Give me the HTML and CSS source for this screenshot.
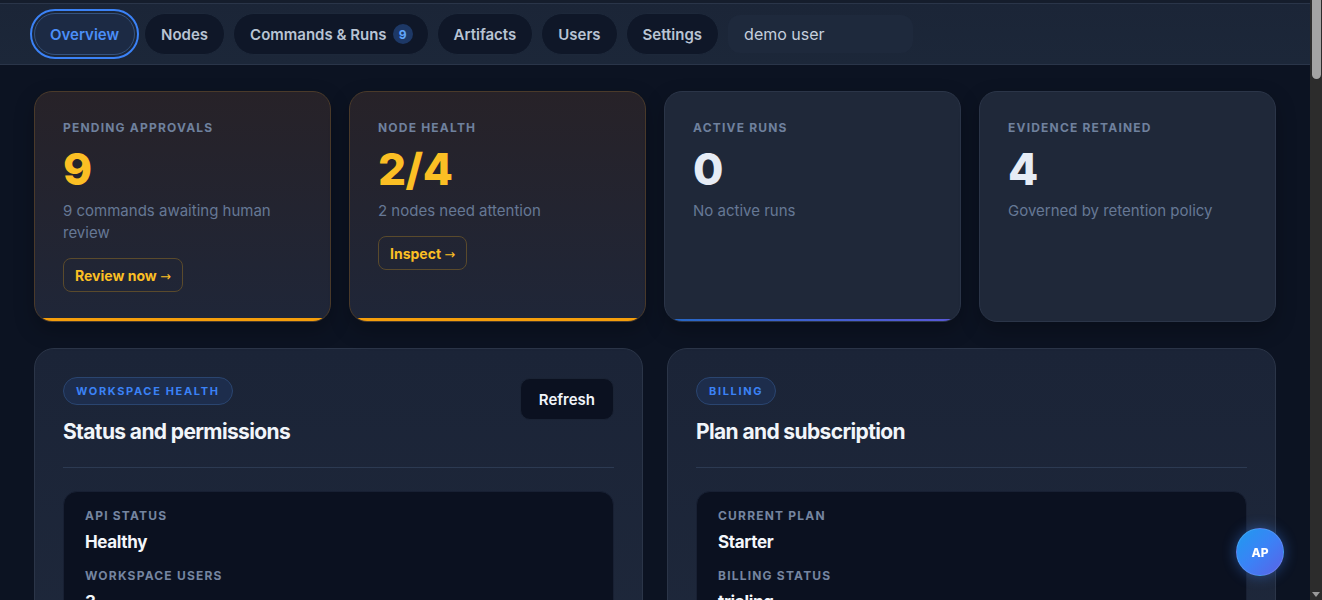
FILE: index.html
```html
<!DOCTYPE html>
<html lang="en">

<head>
  <meta charset="UTF-8">
  <meta name="viewport" content="width=device-width, initial-scale=1.0">
  <title>Workspace Overview</title>
  <link rel="stylesheet" href="styles.css">
</head>

<body>
  <header class="topbar">
    <nav class="tabs">
      <a class="tab active" href="#">Overview</a>
      <a class="tab" href="#">Nodes</a>
      <a class="tab with-badge" href="#">Commands &amp; Runs <span class="badge">9</span></a>
      <a class="tab" href="#">Artifacts</a>
      <a class="tab" href="#">Users</a>
      <a class="tab" href="#">Settings</a>
    </nav>
    <span class="who">demo user</span>
  </header>

  <main class="page">
    <section class="stats">
      <div class="stat warn">
        <div class="stat-label">Pending approvals</div>
        <div class="stat-value">9</div>
        <p class="stat-desc">9 commands awaiting human review</p>
        <button class="stat-btn">Review now <span class="arrow">→</span></button>
      </div>
      <div class="stat warn">
        <div class="stat-label">Node health</div>
        <div class="stat-value">2/4</div>
        <p class="stat-desc">2 nodes need attention</p>
        <button class="stat-btn">Inspect <span class="arrow">→</span></button>
      </div>
      <div class="stat live">
        <div class="stat-label">Active runs</div>
        <div class="stat-value">0</div>
        <p class="stat-desc">No active runs</p>
      </div>
      <div class="stat">
        <div class="stat-label">Evidence retained</div>
        <div class="stat-value">4</div>
        <p class="stat-desc">Governed by retention policy</p>
      </div>
    </section>

    <section class="panels">
      <div class="panel">
        <div class="panel-head">
          <div>
            <span class="tag">Workspace health</span>
            <h2>Status and permissions</h2>
          </div>
          <button class="btn-dark">Refresh</button>
        </div>
        <div class="facts">
          <div class="fact-label">API status</div>
          <div class="fact-value">Healthy</div>
          <div class="fact-label">Workspace users</div>
          <div class="fact-value">3</div>
          <div class="fact-label">Your role</div>
          <div class="fact-value">Owner</div>
          <div class="fact-label">Approval policy</div>
          <div class="fact-value">Human review required</div>
        </div>
      </div>

      <div class="panel">
        <div class="panel-head">
          <div>
            <span class="tag">Billing</span>
            <h2>Plan and subscription</h2>
          </div>
        </div>
        <div class="facts">
          <div class="fact-label">Current plan</div>
          <div class="fact-value">Starter</div>
          <div class="fact-label">Billing status</div>
          <div class="fact-value">trialing</div>
          <div class="fact-label">Seats</div>
          <div class="fact-value">3 of 5</div>
          <div class="fact-label">Renews</div>
          <div class="fact-value">—</div>
        </div>
      </div>
    </section>
  </main>

  <button class="avatar">AP</button>

  <!-- window scrollbar, drawn since the capture hides the native one -->
  <div class="scrollbar">
    <span class="thumb"></span>
    <span class="down"></span>
  </div>
</body>

</html>
```

FILE: styles.css
```css
* {
  box-sizing: border-box;
}

html {
  background: #0c1322;
}

body {
  margin: 0;
  padding-right: 12px;
  min-height: 4600px;
  font-family: Inter, "Noto Sans", Arial, sans-serif;
  color: #e5ebf4;
  background: #0c1322;
}

.topbar {
  display: flex;
  align-items: center;
  height: 60px;
  padding: 1px 34px 0;
  background: linear-gradient(180deg, #1b2537, #1c2739);
  border-top: 3px solid #151d2c;
  border-bottom: 1px solid #2a3549;
  box-shadow: inset 0 1px 0 #2a3549;
  box-sizing: content-box;
}

.tabs {
  display: flex;
  gap: 8px;
}

.tab {
  display: flex;
  align-items: center;
  height: 42px;
  padding: 0 16px;
  border-radius: 21px;
  border: 1px solid #1d283a;
  background: #0f1728;
  color: #b9c4d4;
  font-size: 15px;
  font-weight: 600;
  text-decoration: none;
}

.tab.with-badge {
  padding-right: 15px;
}

.tab.active {
  padding: 0 15px;
  margin-right: 1px;
  background: #1c2a44;
  border-color: #34527e;
  color: #4b8ef7;
  outline: 2px solid #3b82f6;
  outline-offset: 2px;
}

.badge {
  display: inline-flex;
  align-items: center;
  justify-content: center;
  width: 20px;
  height: 20px;
  margin-left: 6px;
  border-radius: 50%;
  background: #1d3866;
  color: #60a5fa;
  font-size: 12px;
  font-weight: 700;
}

.who {
  display: flex;
  align-items: center;
  height: 38px;
  min-width: 185px;
  margin-left: 9px;
  padding: 0 16px;
  border-radius: 12px;
  background: #1e293c;
  color: #c5cfdd;
  font-size: 16px;
}

.page {
  padding: 26px 34px;
}

.stats {
  display: grid;
  grid-template-columns: repeat(4, 1fr);
  gap: 18px;
}

.stat {
  position: relative;
  overflow: hidden;
  min-height: 231px;
  padding: 28px 28px 24px;
  border-radius: 18px;
  border: 1px solid #2b3548;
  background: #1f2839;
  box-shadow: 0 8px 20px rgba(0, 0, 0, 0.25);
}

.stat.warn {
  border-color: #4a3a2a;
  background: linear-gradient(180deg, #272228 0%, #1f2638 100%);
}

.stat.warn::after,
.stat.live::after {
  content: "";
  position: absolute;
  left: 0;
  right: 0;
  bottom: 0;
  height: 3px;
  background: #f59e0b;
}

.stat.live::after {
  height: 2px;
  background: linear-gradient(90deg, #2567c4, #5a58d8);
}

.stat-label {
  font-size: 12px;
  line-height: 16px;
  font-weight: 700;
  letter-spacing: 0.1em;
  text-transform: uppercase;
  color: #6f819e;
}

.stat-value {
  margin-top: 9px;
  font-size: 44px;
  line-height: 48px;
  font-weight: 800;
  letter-spacing: -0.01em;
  color: #e6ecf5;
}

.warn .stat-value {
  color: #fbbf24;
}

.stat-desc {
  margin: 7px 0 0;
  max-width: 230px;
  font-size: 15px;
  line-height: 22px;
  color: #667895;
}

.stat-btn {
  margin-top: 14px;
  height: 34px;
  padding: 0 11px;
  border-radius: 8px;
  border: 1px solid #5a4a2c;
  background: transparent;
  color: #fbbf24;
  font-family: inherit;
  font-size: 14px;
  font-weight: 700;
}

.arrow {
  font-family: "DejaVu Sans", sans-serif;
  font-weight: 400;
  font-size: 13px;
}

.panels {
  display: grid;
  grid-template-columns: 1fr 1fr;
  gap: 24px;
  margin-top: 26px;
}

.panel {
  padding: 28px;
  border-radius: 20px;
  border: 1px solid #2b3548;
  background: linear-gradient(180deg, #1b2437 0%, #1f293c 100%);
}

.panel-head {
  display: flex;
  justify-content: space-between;
  align-items: flex-start;
  padding-bottom: 21px;
  border-bottom: 1px solid #2c3a52;
}

.tag {
  display: inline-flex;
  align-items: center;
  height: 28px;
  padding: 0 12px;
  border-radius: 14px;
  border: 1px solid #2a4570;
  background: #1d2d4c;
  color: #3b82f6;
  font-size: 11px;
  font-weight: 700;
  letter-spacing: 0.15em;
  text-transform: uppercase;
}

.panel h2 {
  margin: 13px 0 0;
  font-size: 21px;
  line-height: 28px;
  font-weight: 700;
  letter-spacing: -0.03em;
  color: #f1f5fa;
}

.btn-dark {
  height: 42px;
  margin-top: 1px;
  padding: 0 18px;
  border-radius: 10px;
  border: 1px solid #1a2334;
  background: #0b1120;
  color: #f1f5fa;
  font-family: inherit;
  font-size: 15px;
  font-weight: 600;
}

.facts {
  margin-top: 23px;
  padding: 16px 21px;
  border-radius: 14px;
  border: 1px solid #182033;
  background: #0b1120;
}

.fact-label {
  font-size: 12px;
  line-height: 16px;
  font-weight: 700;
  letter-spacing: 0.1em;
  text-transform: uppercase;
  color: #7585a0;
}

.fact-value {
  margin: 6px 0 14px;
  font-size: 17px;
  line-height: 24px;
  font-weight: 700;
  letter-spacing: -0.02em;
  color: #f4f7fb;
}

.fact-value:last-child {
  margin-bottom: 0;
}

.avatar {
  position: fixed;
  right: 38px;
  bottom: 24px;
  width: 48px;
  height: 48px;
  border-radius: 50%;
  border: 1px solid rgba(255, 255, 255, 0.12);
  background: linear-gradient(135deg, #1e9bef 0%, #3b82f6 50%, #5b61e6 100%);
  box-shadow: 0 0 14px rgba(59, 130, 246, 0.45);
  color: #fff;
  font-family: inherit;
  font-size: 12px;
  font-weight: 800;
}

.scrollbar {
  position: fixed;
  top: 0;
  right: 0;
  bottom: 0;
  width: 12px;
  display: flex;
  flex-direction: column;
  justify-content: space-between;
  align-items: center;
  background: #2c2c2c;
}

.thumb {
  width: 9px;
  height: 79px;
  border-radius: 0 0 5px 5px;
  background: #a3a3a3;
}

.down {
  margin-bottom: 3px;
  border-left: 4px solid transparent;
  border-right: 4px solid transparent;
  border-top: 5px solid #9a9a9a;
}
```
